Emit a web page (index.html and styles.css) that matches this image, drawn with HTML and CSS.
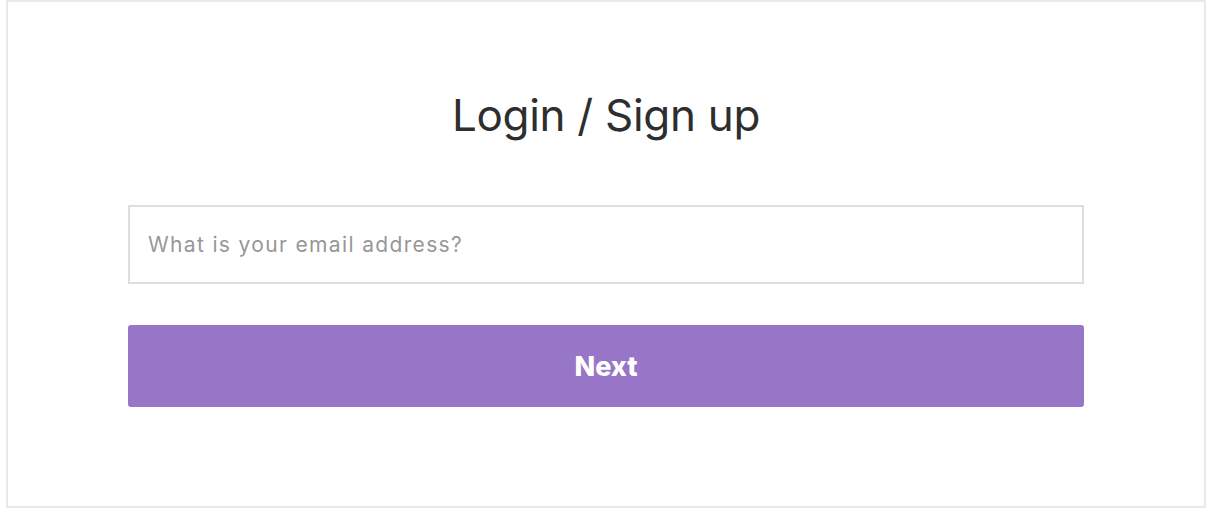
FILE: index.html
```html
<!DOCTYPE html>
<html>
<head>
<meta charset="utf-8">
<link rel="stylesheet" href="styles.css">
</head>
<body>
<div class="card">
  <h1 class="title">Login / Sign up</h1>
  <form class="form">
    <input class="email" type="email" placeholder="What is your email address?">
    <button class="next" type="button">Next</button>
  </form>
</div>
</body>
</html>
```
FILE: styles.css
```css
html, body {
  margin: 0;
  padding: 0;
  background: #ffffff;
}
body {
  font-family: "Inter", "Open Sans", sans-serif;
}
.card {
  box-sizing: border-box;
  margin: 0 4px 0 6px;
  height: 508px;
  border: 2px solid #e9e9e9;
  padding: 83px 120px 0;
  display: flex;
  flex-direction: column;
  align-items: stretch;
}
.title {
  margin: 0;
  text-align: center;
  font-size: 44px;
  font-weight: 400;
  color: #2e2e2e;
  line-height: 60px;
  letter-spacing: -0.3px;
}
.form {
  margin-top: 60px;
  display: flex;
  flex-direction: column;
  gap: 41px;
}
.email {
  box-sizing: border-box;
  height: 79px;
  border: 2px solid #dedede;
  border-radius: 0;
  padding: 0 18px;
  font-family: "Inter", sans-serif;
  font-size: 21px;
  letter-spacing: 1.35px;
  color: #333;
  outline: none;
}
.email::placeholder {
  color: #979797;
}
.next {
  height: 82px;
  border: none;
  border-radius: 3px;
  background: #9775c7;
  color: #ffffff;
  font-family: "Inter", sans-serif;
  font-weight: 800;
  font-size: 27px;
  cursor: pointer;
}
```
